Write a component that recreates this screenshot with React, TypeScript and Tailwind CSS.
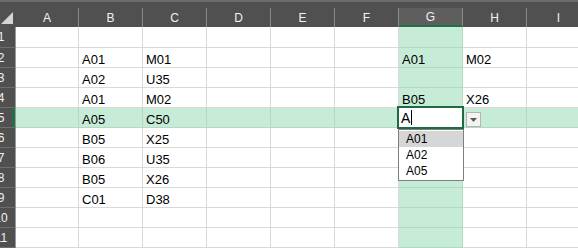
import React from 'react'

const cols = [
  { key: 'A', w: 'w-[63px]' },
  { key: 'B', w: 'w-[64px]' },
  { key: 'C', w: 'w-[64px]' },
  { key: 'D', w: 'w-[64px]' },
  { key: 'E', w: 'w-[64px]' },
  { key: 'F', w: 'w-[64px]' },
  { key: 'G', w: 'w-[64px]' },
  { key: 'H', w: 'w-[64px]' },
  { key: 'I', w: 'w-[64px]' },
]

const data: Record<number, Record<string, string>> = {
  2: { B: 'A01', C: 'M01', G: 'A01', H: 'M02' },
  3: { B: 'A02', C: 'U35' },
  4: { B: 'A01', C: 'M02', G: 'B05', H: 'X26' },
  5: { B: 'A05', C: 'C50' },
  6: { B: 'B05', C: 'X25' },
  7: { B: 'B06', C: 'U35' },
  8: { B: 'B05', C: 'X26' },
  9: { B: 'C01', C: 'D38' },
}

const rows = [1, 2, 3, 4, 5, 6, 7, 8, 9, 10, 11]

function ActiveCell() {
  return (
    <div className="relative w-[64px] shrink-0 h-full bg-white">
      {/* edit border */}
      <div className="absolute -left-[2px] -top-[2px] -right-[1px] -bottom-[1px] border-2 border-[#1e6b41] z-10 flex items-end pl-[2px] pb-[1px]">
        <span className="text-[14px] leading-[16px] text-black">A</span>
        <span className="w-px h-[15px] bg-black ml-[1px] mb-[1px]" />
      </div>
      {/* dropdown arrow */}
      <div className="absolute left-[67px] top-[4px] w-[15px] h-[15px] bg-[#f3f3f3] border border-[#b4b4b4] z-10 flex items-center justify-center">
        <svg width="7" height="4" viewBox="0 0 7 4">
          <path d="M0 0 L7 0 L3.5 4 Z" fill="#5a5a5a" />
        </svg>
      </div>
      {/* list */}
      <div className="absolute -left-[1px] top-[21px] w-[66px] bg-white border border-[#7f7f7f] z-20 py-[1px] text-[12px] text-black">
        <div className="h-[16px] leading-[16px] bg-[#d6d6d6] pl-[7px]">A01</div>
        <div className="h-[16px] leading-[16px] pl-[7px]">A02</div>
        <div className="h-[16px] leading-[16px] pl-[7px]">A05</div>
      </div>
    </div>
  )
}

export default function App() {
  return (
    <div
      className="w-[578px] h-[248px] overflow-hidden bg-white"
      style={{ fontFamily: '"Liberation Sans", Arial, sans-serif' }}
    >
      {/* Column headers */}
      <div className="flex h-[27px] bg-[#505050] border-t-2 border-[#6b6b6b]">
        <div className="w-[16px] shrink-0 relative flex items-end pb-[3px] pl-[1px]">
          <svg width="12" height="12" viewBox="0 0 12 12">
            <path d="M12 0 L12 12 L0 12 Z" fill="#d4d4d4" />
          </svg>
        </div>
        {cols.map((c) => (
          <div key={c.key} className={`${c.w} shrink-0 pt-[6px]`}>
            <div
              className={
                c.key === 'G'
                  ? 'h-full border-r border-[#8a8a8a] bg-[#5e5e5e] border-b-2 border-b-[#1e7145] flex items-center justify-center text-[12px] text-[#f2f2f2]'
                  : 'h-full border-r border-[#8a8a8a] flex items-center justify-center text-[12px] text-[#f2f2f2]'
              }
            >
              {c.key}
            </div>
          </div>
        ))}
      </div>

      {/* Rows */}
      {rows.map((r) => (
        <div key={r} className={r === 1 ? 'flex h-[21px]' : 'flex h-[20px]'}>
          <div className="w-[16px] shrink-0 overflow-hidden bg-[#505050] border-r border-[#9a9a9a] border-b border-b-[#6e6e6e] relative">
            <div className="w-[26px] -ml-[12px] h-full flex items-center justify-center text-[12px] text-[#f2f2f2]">
              {r}
            </div>
            {r === 5 && <div className="absolute right-0 top-0 bottom-0 w-[3px] bg-[#1e7145]" />}
          </div>
          {cols.map((c) => {
            if (r === 5 && c.key === 'G') return <ActiveCell key={c.key} />
            const green = r === 5 || c.key === 'G'
            return (
              <div
                key={c.key}
                className={
                  green
                    ? `${c.w} shrink-0 h-full bg-[#c6ecd8] border-r border-b border-[#b2d9c4] flex items-end pl-[3px] text-[13px] leading-[15px] text-black`
                    : `${c.w} shrink-0 h-full border-r border-b border-[#d9d9d9] flex items-end pl-[3px] text-[13px] leading-[15px] text-black`
                }
              >
                {data[r]?.[c.key] ?? ''}
              </div>
            )
          })}
        </div>
      ))}
    </div>
  )
}
